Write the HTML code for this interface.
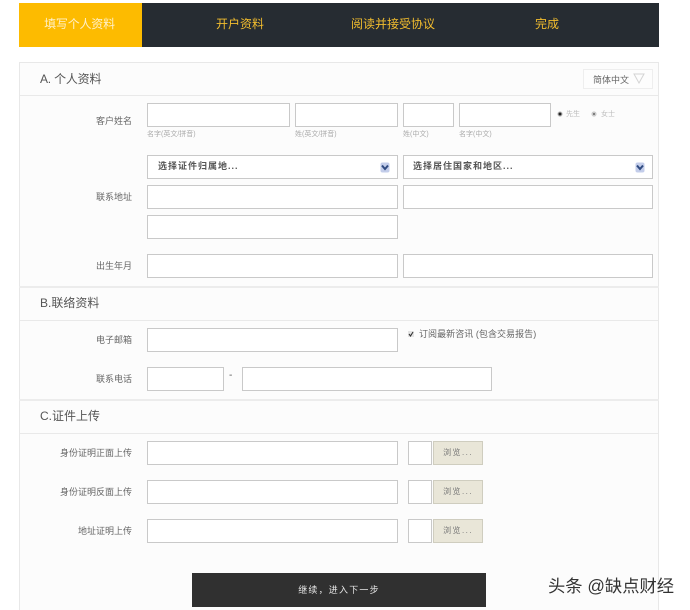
<!DOCTYPE html>
<html lang="zh">
<head>
<meta charset="utf-8">
<title>填写个人资料</title>
<style>
html,body{margin:0;padding:0;background:#fff}
#p{position:relative;width:690px;height:610px;overflow:hidden;background:#fff;font-family:"Liberation Sans","Noto Sans CJK SC",sans-serif;color:#555}
#p div{position:absolute;box-sizing:border-box;white-space:nowrap}
.i{background:#fff;border:1px solid #c9c9c9;height:24px}
.l{font-size:9px;line-height:12px;text-align:right;width:100px;left:32px;color:#666}
.h{font-size:12px;line-height:16px;color:#555;left:40px}
.s{font-size:7px;line-height:10px;color:#aaa}
.n{top:3px;height:44px;line-height:42px;font-size:12px;color:#f2bd2e;text-align:center}
.line{background:#e9e9e9;left:20px;width:638px;height:1px}
.thick{background:#ececec;left:19px;width:640px;height:2px}
.b{background:#e9e6d8;border:1px solid #cfcdbf;width:50px;height:24px;font-size:8px;line-height:22px;text-align:center;color:#777;letter-spacing:1.4px}
.sel{font-size:9px;font-weight:bold;line-height:21px;color:#555;letter-spacing:1px;padding-left:10px}
</style>
</head>
<body>
<div id="p">
  <div style="left:19px;top:3px;width:640px;height:44px;background:#262c32"></div>
  <div style="left:19px;top:3px;width:123px;height:44px;background:#fdbb00"></div>
  <div class="n" style="left:18px;width:123px;color:#fff0c8;letter-spacing:-.2px">填写个人资料</div>
  <div class="n" style="left:190px;width:100px">开户资料</div>
  <div class="n" style="left:333px;width:120px">阅读并接受协议</div>
  <div class="n" style="left:497px;width:100px">完成</div>

  <div style="left:19px;top:62px;width:640px;height:560px;background:#fcfcfc;border:1px solid #e8e8e8"></div>
  <div class="line" style="top:95px"></div>
  <div class="h" style="top:71px;letter-spacing:-.2px">A. 个人资料</div>
  <div style="left:583px;top:69px;width:70px;height:20px;background:#fdfdfd;border:1px solid #eee"></div>
  <div style="left:593px;top:74px;font-size:9px;line-height:12px;color:#666">简体中文</div>
  <svg style="position:absolute;left:633px;top:73px" width="12" height="11" viewBox="0 0 12 11"><path d="M1 1H11L6 10Z" fill="none" stroke="#d4d4d4"/></svg>

  <div class="l" style="top:115px">客户姓名</div>
  <div class="i" style="left:147px;top:103px;width:143px"></div>
  <div class="i" style="left:295px;top:103px;width:103px"></div>
  <div class="i" style="left:403px;top:103px;width:51px"></div>
  <div class="i" style="left:459px;top:103px;width:92px"></div>
  <div class="s" style="left:147px;top:130px">名字(英文/拼音)</div>
  <div class="s" style="left:295px;top:130px">姓(英文/拼音)</div>
  <div class="s" style="left:403px;top:130px">姓(中文)</div>
  <div class="s" style="left:459px;top:130px">名字(中文)</div>
  <svg style="position:absolute;left:557px;top:111px" width="6" height="6"><circle cx="3" cy="3" r="2.6" fill="#bbb"/><circle cx="3" cy="3" r="1.5" fill="#222"/></svg>
  <div class="s" style="left:566px;top:110px;color:#bbb">先生</div>
  <svg style="position:absolute;left:591px;top:111px" width="6" height="6"><circle cx="3" cy="3" r="2.6" fill="#ccc"/><circle cx="3" cy="3" r="1" fill="#666"/></svg>
  <div class="s" style="left:601px;top:110px;color:#bbb">女士</div>

  <div class="i sel" style="left:147px;top:155px;width:251px">选择证件归属地...</div>
  <div class="i sel" style="left:403px;top:155px;width:250px;padding-left:9px">选择居住国家和地区...</div>
  <svg style="position:absolute;left:380px;top:162px" width="10" height="11" viewBox="0 0 10 11"><rect x="0.5" y="0.5" width="9" height="10" rx="2" fill="#c3cdea"/><path d="M2 3.5L5 7L8 3.5" fill="none" stroke="#2f4a80" stroke-width="2"/></svg>
  <svg style="position:absolute;left:635px;top:162px" width="10" height="11" viewBox="0 0 10 11"><rect x="0.5" y="0.5" width="9" height="10" rx="2" fill="#c3cdea"/><path d="M2 3.5L5 7L8 3.5" fill="none" stroke="#2f4a80" stroke-width="2"/></svg>

  <div class="l" style="top:191px">联系地址</div>
  <div class="i" style="left:147px;top:185px;width:251px"></div>
  <div class="i" style="left:403px;top:185px;width:250px"></div>
  <div class="i" style="left:147px;top:215px;width:251px"></div>

  <div class="l" style="top:260px">出生年月</div>
  <div class="i" style="left:147px;top:254px;width:251px"></div>
  <div class="i" style="left:403px;top:254px;width:250px"></div>

  <div class="thick" style="top:286px"></div>
  <div class="h" style="top:295px">B.联络资料</div>
  <div class="line" style="top:320px"></div>

  <div class="l" style="top:334px">电子邮箱</div>
  <div class="i" style="left:147px;top:328px;width:251px"></div>
  <svg style="position:absolute;left:408px;top:331px" width="6" height="6" viewBox="0 0 6 6"><rect width="6" height="6" fill="#e4e4e4"/><path d="M1 3L2.5 5L5 1" fill="none" stroke="#333" stroke-width="1.1"/></svg>
  <div style="left:419px;top:328px;font-size:9px;line-height:12px;color:#666;letter-spacing:.05px">订阅最新咨讯 (包含交易报告)</div>

  <div class="l" style="top:373px">联系电话</div>
  <div class="i" style="left:147px;top:367px;width:77px"></div>
  <div style="left:229px;top:370px;font-size:10px;line-height:12px;color:#555">-</div>
  <div class="i" style="left:242px;top:367px;width:250px"></div>

  <div class="thick" style="top:399px"></div>
  <div class="h" style="top:408px">C.证件上传</div>
  <div class="line" style="top:433px"></div>

  <div class="l" style="top:447px">身份证明正面上传</div>
  <div class="i" style="left:147px;top:441px;width:251px"></div>
  <div class="i" style="left:408px;top:441px;width:24px"></div>
  <div class="b" style="left:433px;top:441px">浏览...</div>

  <div class="l" style="top:486px">身份证明反面上传</div>
  <div class="i" style="left:147px;top:480px;width:251px"></div>
  <div class="i" style="left:408px;top:480px;width:24px"></div>
  <div class="b" style="left:433px;top:480px">浏览...</div>

  <div class="l" style="top:525px">地址证明上传</div>
  <div class="i" style="left:147px;top:519px;width:251px"></div>
  <div class="i" style="left:408px;top:519px;width:24px"></div>
  <div class="b" style="left:433px;top:519px">浏览...</div>

  <div style="left:192px;top:573px;width:294px;height:34px;background:#303030;color:#e6e6e6;font-size:9px;line-height:35px;text-align:center;letter-spacing:1.2px">继续，进入下一步</div>

  <div style="left:548px;top:576px;font-size:17.3px;line-height:20px;color:#333;text-shadow:0 0 2px #fff,0 0 2px #fff">头条 @缺点财经</div>
</div>
</body>
</html>
